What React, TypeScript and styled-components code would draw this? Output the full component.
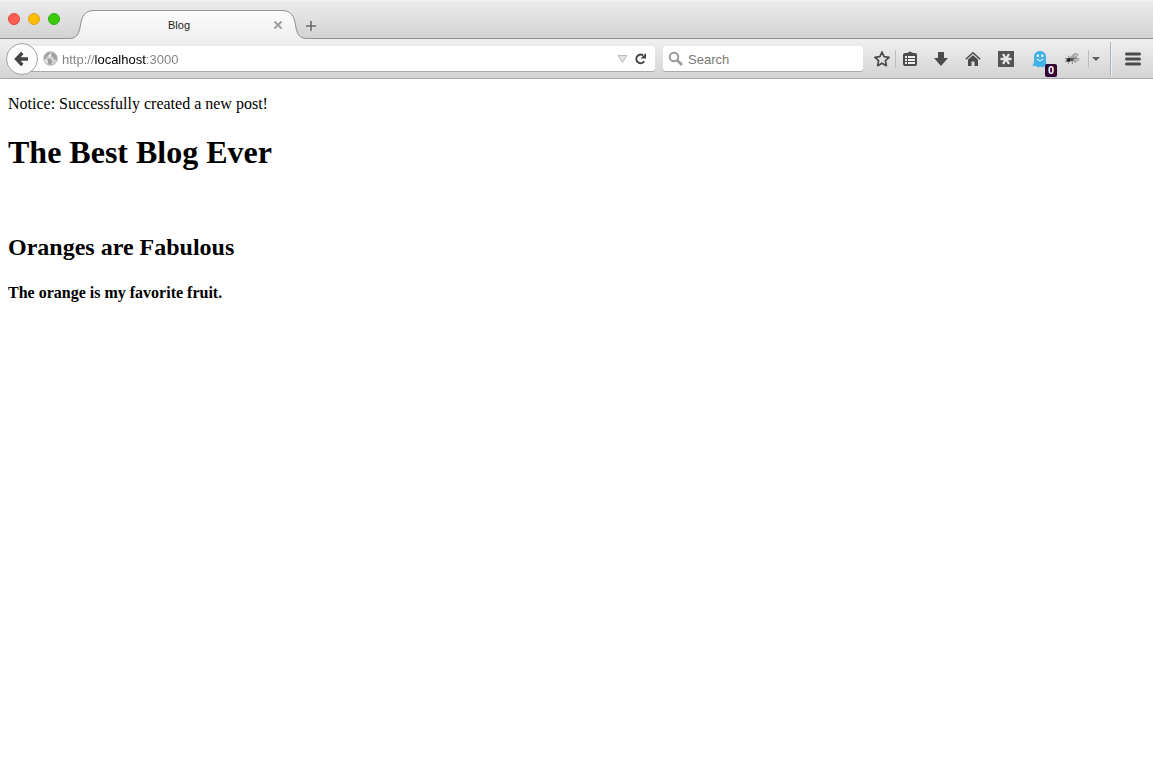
import React from "react";
import styled, { createGlobalStyle } from "styled-components";

const GlobalStyle = createGlobalStyle`
  * { box-sizing: border-box; }
  body { margin: 0; background: #fff; }
  button { padding: 0; border: 0; background: none; color: inherit; font: inherit; }
  svg { display: block; }
`;

const uiFont = `"Liberation Sans", Helvetica, Arial, sans-serif`;

const Chrome = styled.header`
  font-family: ${uiFont};
  color: #4b4b4b;
`;

const TabStrip = styled.div`
  display: flex;
  align-items: flex-end;
  height: 39px;
  background: linear-gradient(#ececec, #d2d2d2);
  border-top: 1px solid #f4f4f4;
  box-shadow: inset 0 -1px #8f8f8f;
`;

const WindowButtons = styled.div`
  display: flex;
  gap: 8px;
  align-self: flex-start;
  padding: 12px 8px 0;
`;

const WindowButton = styled.button<{ $fill: string; $edge: string }>`
  width: 12px;
  height: 12px;
  border-radius: 50%;
  background: ${(p) => p.$fill};
  border: 1px solid ${(p) => p.$edge};
`;

const Tab = styled.div`
  display: flex;
  width: 238px;
  height: 29px;
  margin-left: 1px;
  font-size: 11px;
  color: #222;
`;

const TabBody = styled.div`
  display: flex;
  flex: 1;
  align-items: center;
  background: linear-gradient(#fbfbfb, #f0f0f0);
  border-top: 1px solid #949494;
`;

const TabTitle = styled.span`
  flex: 1;
  padding-right: 8px;
  text-align: center;
  line-height: 14px;
`;

const TabClose = styled.button`
  position: relative;
  width: 14px;
  height: 14px;
  margin-right: -4px;
  color: #a0a0a0;
`;

const NewTab = styled.button`
  width: 12px;
  height: 26px;
  margin-left: -2px;
`;

const Toolbar = styled.div`
  display: flex;
  align-items: center;
  height: 40px;
  padding-left: 6px;
  background: linear-gradient(#f0f0f0, #d3d3d3);
  border-bottom: 1px solid #a9a9a9;
`;

const BackButton = styled.button`
  position: relative;
  display: grid;
  flex: none;
  place-items: center;
  width: 32px;
  height: 32px;
  border: 1px solid #a3a3a3;
  border-radius: 50%;
  background: #fbfbfb;
`;

const Field = styled.label`
  display: flex;
  align-items: center;
  height: 25px;
  background: #fff;
  border-radius: 3px;
  box-shadow: 0 1px #a9a9a9;
`;

const AddressField = styled(Field)`
  flex: 1;
  min-width: 0;
  margin-left: -12px;
  padding: 0 6px 0 17px;
`;

const SearchField = styled(Field)`
  width: 200px;
  margin-left: 8px;
  padding-left: 5px;
`;

const TextInput = styled.input`
  flex: 1;
  min-width: 0;
  height: 25px;
  padding: 2px 0 0;
  border: 0;
  outline: 0;
  background: none;
  color: #222;
  font: 13px/22px ${uiFont};
  &::placeholder { color: #777; opacity: 1; }
`;

const AddressInput = styled(TextInput)`
  margin-left: 4px;
  background: linear-gradient(90deg, #808080 33px, #000 33px 84px, #808080 84px);
  background-clip: text;
  -webkit-text-fill-color: transparent;
`;

const SearchInput = styled(TextInput)`
  margin-left: 4px;
`;

const FieldButton = styled.button`
  display: grid;
  place-items: center;
  width: 18px;
  height: 24px;
`;

const Tools = styled.nav`
  display: flex;
  align-items: center;
  height: 100%;
  padding-left: 6px;
`;

const ToolButton = styled.button<{ $width: number }>`
  position: relative;
  display: grid;
  place-items: center;
  width: ${(p) => p.$width}px;
  height: 32px;
`;

const Divider = styled.span`
  width: 1px;
  height: 18px;
  background: #bdbdbd;
`;

const MenuDivider = styled.span`
  width: 2px;
  height: 34px;
  margin-left: 7px;
  background: linear-gradient(90deg, #a9b3bd 1px, #eef0f2 1px);
`;

const Badge = styled.span`
  position: absolute;
  right: -1px;
  bottom: -2px;
  width: 12px;
  height: 13px;
  border-radius: 2px;
  background: #330033;
  color: #fff;
  font-size: 11px;
  font-weight: 700;
  line-height: 13px;
  text-align: center;
`;

const Page = styled.main`
  padding: 16px 8px;
  color: #000;
  font: 16px/18px "Liberation Serif", "Times New Roman", serif;
`;

const Notice = styled.p`
  margin: 0;
`;

const BlogTitle = styled.h1`
  margin: 21px 0 0;
  font-size: 32px;
  line-height: 36px;
`;

const Post = styled.article`
  margin-top: 63px;
`;

const PostTitle = styled.h2`
  margin: 0;
  font-size: 24px;
  line-height: 28px;
`;

const PostBody = styled.h4`
  margin: 23px 0 0;
  font-size: 16px;
`;

const TabEdge = ({ right = false }: { right?: boolean }) => (
  <svg width="26" height="29" viewBox="0 0 26 29" aria-hidden="true">
    <defs>
      <linearGradient id={right ? "edgeR" : "edgeL"} x2="0" y2="1">
        <stop stopColor="#fbfbfb" />
        <stop offset="1" stopColor="#f0f0f0" />
      </linearGradient>
    </defs>
    <g transform={right ? "matrix(-1 0 0 1 26 0)" : undefined}>
      <path
        d="M0 28.5C8 28.5 10 24 11.500 15C13 5.500 16 .5 26 .5V29H0Z"
        fill={right ? "url(#edgeR)" : "url(#edgeL)"}
      />
      <path d="M0 28.5C8 28.5 10 24 11.500 15C13 5.500 16 .5 26 .5" fill="none" stroke="#8f8f8f" />
    </g>
  </svg>
);

const CloseIcon = () => (
  <svg width="14" height="14" viewBox="0 0 14 14">
    <path d="M3.500 3.500l7 7M10.500 3.500l-7 7" stroke="currentColor" strokeWidth="2" />
  </svg>
);

const PlusIcon = () => (
  <svg width="12" height="12" viewBox="0 0 12 12">
    <path d="M6 1v10M1 6h10" stroke="#fff" strokeWidth="3" opacity=".4" />
    <path d="M6 1v10M1 6h10" stroke="#666" strokeWidth="1.600" />
  </svg>
);

const BackIcon = () => (
  <svg width="16" height="16" viewBox="0 0 16 16">
    <path d="M8.300 2L2.500 8l5.800 6M3 8h11" fill="none" stroke="#444" strokeWidth="3.300" />
  </svg>
);

const GlobeIcon = () => (
  <svg width="15" height="15" viewBox="0 0 15 15">
    <circle cx="7.500" cy="7.500" r="6.700" fill="#d0d0d0" stroke="#aeaeae" />
    <path d="M2 3.500L5.500 1l2 .8-.7 1.700-2 1-.8 2.200-2.800 1.500C.8 6 1 4.800 2 3.500Z" fill="#a6a6a6" />
    <path d="M9 1.500l2.700.8 2.300 4-.5 2.700-2.200-.5-1-2.500L8 5.200Z" fill="#a0a0a0" />
    <path d="M4.500 7.500l3 .5 1.500 2-1 3.800-2.500-.8Z" fill="#9c9c9c" />
    <path d="M7 2.800l1.500 1.700-2 2-1-1ZM1.500 8.500l2.500.7.5 3.300C2.800 11.500 2 10.500 1.500 8.500Z" fill="#ededed" />
  </svg>
);

const HistoryIcon = () => (
  <svg width="11" height="8" viewBox="0 0 11 8">
    <path d="M1 .5h9L5.500 7.500Z" fill="#e4e4e4" stroke="#bcbcbc" />
  </svg>
);

const ReloadIcon = () => (
  <svg width="13" height="13" viewBox="0 0 13 13">
    <path d="M9 3.300A4.300 4.300 0 1 0 10.200 9.300" fill="none" stroke="#444" strokeWidth="2" />
    <path d="M12 1v5.500H6.500L8.800 4.200Z" fill="#444" />
  </svg>
);

const SearchIcon = () => (
  <svg width="16" height="16" viewBox="0 0 16 16">
    <circle cx="6" cy="6" r="4.300" fill="none" stroke="#999" strokeWidth="2" />
    <path d="M9 9l5 5" stroke="#999" strokeWidth="2.600" />
  </svg>
);

const StarIcon = () => (
  <svg width="18" height="18" viewBox="0 0 18 18">
    <path
      d="M9 2l2.100 4.700 5 .6-3.700 3.400 1 5L9 13.200l-4.400 2.500 1-5L1.900 7.300l5-.6Z"
      fill="none"
      stroke="currentColor"
      strokeWidth="1.700"
      strokeLinejoin="round"
    />
  </svg>
);

const ClipboardIcon = () => (
  <svg width="16" height="16" viewBox="0 0 16 16">
    <path d="M3 2h2L8 .5 11 2h2a2 2 0 0 1 2 2v9a2 2 0 0 1-2 2H3a2 2 0 0 1-2-2V4a2 2 0 0 1 2-2Z" fill="currentColor" />
    <path d="M3 6h2M6 6h7M3 9h2M6 9h7M3 12h2M6 12h7" stroke="#eee" strokeWidth="1.800" />
  </svg>
);

const DownloadIcon = () => (
  <svg width="16" height="16" viewBox="0 0 16 16">
    <path d="M5 1h6v6h4l-7 8-7-8h4Z" fill="currentColor" />
  </svg>
);

const HomeIcon = () => (
  <svg width="16" height="16" viewBox="0 0 16 16">
    <path d="M.8 8.300L8 1.700l7.200 6.600" fill="none" stroke="currentColor" strokeWidth="1.500" />
    <path d="M3 8.600l5-4.400 5 4.400V15H9.500v-4.500h-3V15H3Z" fill="currentColor" />
  </svg>
);

const AsteriskIcon = () => (
  <svg width="16" height="16" viewBox="0 0 16 16">
    <path d="M0 0h16v16H0Z" fill="#555" />
    <path d="M2.500 8h11M5 3l6 10M11 3L5 13" stroke="#e8e8e8" strokeWidth="2.300" />
  </svg>
);

const GhostIcon = () => (
  <svg width="16" height="18" viewBox="0 0 16 18">
    <path
      d="M8 1C4.500 1 2 3.300 2 7v4.500c0 1.700-.5 3-1.700 4.200 1.600.8 2.700.4 3.700-.2.500 1.300 1.400 1.900 2.200 1.900.9 0 1.500-.6 1.900-1.400.5.900 1.200 1.400 2.100 1.400s1.500-.7 1.900-1.700c.8.6 1.700.7 3.300.2-1.100-1-1.400-2.300-1.400-4V7c0-3.700-2.500-6-6-6Z"
      fill="#3fb2ea"
    />
    <ellipse cx="5.900" cy="5.800" rx="1.100" ry="1.500" fill="#fff" />
    <ellipse cx="10.300" cy="5.800" rx="1.100" ry="1.500" fill="#fff" />
    <path d="M4.800 9c1.500 2 5 2 6.600 0" fill="none" stroke="#fff" strokeWidth="1" />
  </svg>
);

const BugIcon = () => (
  <svg width="16" height="16" viewBox="0 0 16 16">
    <path d="M6 7C8 3.500 12 1.500 13.500 3S11 7.500 7 8ZM8 8.500C11 7 15 6.500 15 8.300S11 10.500 8 9.500Z" fill="#c4c4c4" stroke="#808080" strokeWidth=".7" />
    <ellipse cx="7" cy="8.500" rx="2.600" ry="1.800" fill="#555" />
    <circle cx="4.300" cy="9" r="1.900" fill="#222" />
    <path d="M5.500 7L4 4.800M3.500 8L1 7M3.500 10L1 10.500M5.500 10L4 13M8 10l.5 3M9.500 9.500l2.500 2M8 7l3-2.500M9 8l4-1" fill="none" stroke="#666" strokeWidth=".7" />
  </svg>
);

const CaretIcon = () => (
  <svg width="8" height="4" viewBox="0 0 8 4">
    <path d="M0 0h8L4 4Z" fill="#5c5c5c" />
  </svg>
);

const MenuIcon = () => (
  <svg width="16" height="14" viewBox="0 0 16 14">
    <path d="M1.500 2h13M1.500 7h13M1.500 12h13" stroke="currentColor" strokeWidth="3" strokeLinecap="round" />
  </svg>
);

export default function App() {
  return (
    <>
      <GlobalStyle />
      <Chrome>
        <TabStrip>
          <WindowButtons>
            <WindowButton $fill="#ff5f52" $edge="#e2463d" aria-label="Close window" />
            <WindowButton $fill="#ffbe05" $edge="#e1a116" aria-label="Minimize window" />
            <WindowButton $fill="#3bcb08" $edge="#2eae1b" aria-label="Zoom window" />
          </WindowButtons>
          <Tab>
            <TabEdge />
            <TabBody>
              <TabTitle>Blog</TabTitle>
              <TabClose aria-label="Close tab"><CloseIcon /></TabClose>
            </TabBody>
            <TabEdge right />
          </Tab>
          <NewTab aria-label="New tab"><PlusIcon /></NewTab>
        </TabStrip>
        <Toolbar>
          <BackButton aria-label="Back"><BackIcon /></BackButton>
          <AddressField>
            <GlobeIcon />
            <AddressInput aria-label="Address" defaultValue="http://localhost:3000" />
            <FieldButton aria-label="Show history"><HistoryIcon /></FieldButton>
            <FieldButton aria-label="Reload"><ReloadIcon /></FieldButton>
          </AddressField>
          <SearchField>
            <SearchIcon />
            <SearchInput aria-label="Search" placeholder="Search" />
          </SearchField>
          <Tools>
            <ToolButton $width={26} aria-label="Bookmark this page"><StarIcon /></ToolButton>
            <Divider />
            <ToolButton $width={28} aria-label="Show bookmarks"><ClipboardIcon /></ToolButton>
            <ToolButton $width={34} aria-label="Downloads"><DownloadIcon /></ToolButton>
            <ToolButton $width={30} aria-label="Home"><HomeIcon /></ToolButton>
            <ToolButton $width={36} aria-label="Asterisk add-on"><AsteriskIcon /></ToolButton>
            <ToolButton $width={32} aria-label="Trackers found">
              <GhostIcon />
              <Badge>0</Badge>
            </ToolButton>
            <ToolButton $width={32} aria-label="Inspect page"><BugIcon /></ToolButton>
            <Divider />
            <ToolButton $width={14} aria-label="Inspector options"><CaretIcon /></ToolButton>
            <MenuDivider />
            <ToolButton $width={41} aria-label="Open menu"><MenuIcon /></ToolButton>
          </Tools>
        </Toolbar>
      </Chrome>
      <Page>
        <Notice>Notice: Successfully created a new post!</Notice>
        <BlogTitle>The Best Blog Ever</BlogTitle>
        <Post>
          <PostTitle>Oranges are Fabulous</PostTitle>
          <PostBody>The orange is my favorite fruit.</PostBody>
        </Post>
      </Page>
    </>
  );
}
